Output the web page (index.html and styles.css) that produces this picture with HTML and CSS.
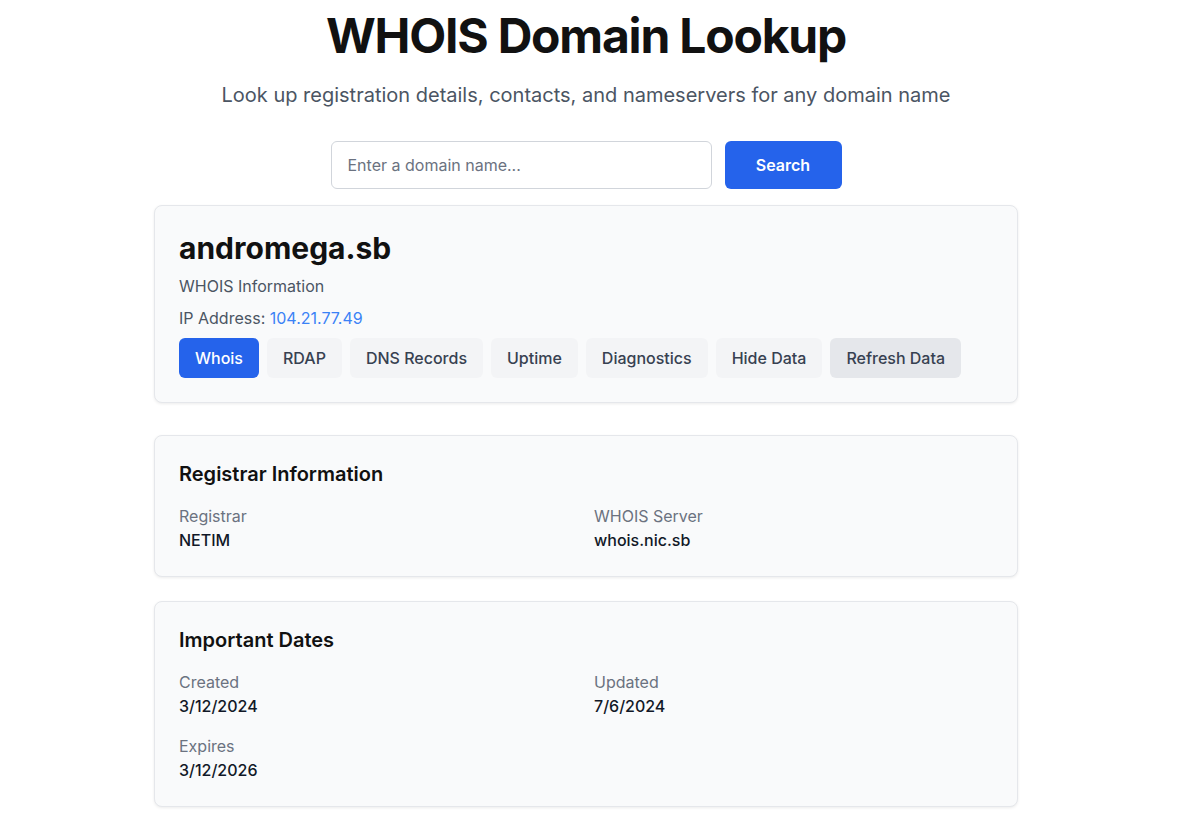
FILE: index.html
```html
<!DOCTYPE html>
<html lang="en">
<head>
  <meta charset="UTF-8">
  <meta name="viewport" content="width=device-width, initial-scale=1.0">
  <title>WHOIS Domain Lookup</title>
  <link rel="stylesheet" href="styles.css">
</head>
<body>
  <div class="page">
    <header class="page-header">
      <h1>WHOIS Domain Lookup</h1>
      <p class="subtitle">Look up registration details, contacts, and nameservers for any domain name</p>
    </header>

    <form class="search-form" onsubmit="return false;">
      <input type="text" class="search-input" placeholder="Enter a domain name...">
      <button type="submit" class="search-button">Search</button>
    </form>

    <section class="card domain-card">
      <h2 class="domain-name">andromega.sb</h2>
      <p class="domain-sub">WHOIS Information</p>
      <p class="domain-sub">IP Address: <a href="#" class="ip-link">104.21.77.49</a></p>
      <div class="tabs">
        <button class="tab active">Whois</button>
        <button class="tab">RDAP</button>
        <button class="tab">DNS Records</button>
        <button class="tab">Uptime</button>
        <button class="tab">Diagnostics</button>
        <button class="tab">Hide Data</button>
        <button class="tab refresh">Refresh Data</button>
      </div>
    </section>

    <section class="card">
      <h3 class="card-title">Registrar Information</h3>
      <div class="info-grid">
        <div class="info-item">
          <div class="info-label">Registrar</div>
          <div class="info-value">NETIM</div>
        </div>
        <div class="info-item">
          <div class="info-label">WHOIS Server</div>
          <div class="info-value">whois.nic.sb</div>
        </div>
      </div>
    </section>

    <section class="card">
      <h3 class="card-title">Important Dates</h3>
      <div class="info-grid">
        <div class="info-item">
          <div class="info-label">Created</div>
          <div class="info-value">3/12/2024</div>
        </div>
        <div class="info-item">
          <div class="info-label">Updated</div>
          <div class="info-value">7/6/2024</div>
        </div>
        <div class="info-item">
          <div class="info-label">Expires</div>
          <div class="info-value">3/12/2026</div>
        </div>
      </div>
    </section>
  </div>
</body>
</html>
```

FILE: styles.css
```css
* {
  box-sizing: border-box;
}
body {
  font-family: Inter, 'Noto Sans', sans-serif;
  background-color: #ffffff;
  color: #111827;
  margin: 0;
  padding: 12px 18px 40px 0;
  line-height: 1.5;
}
.page {
  max-width: 864px;
  margin: 0 auto;
}
.page-header {
  text-align: center;
}
.page-header h1 {
  font-size: 48px;
  line-height: 48px;
  font-weight: 700;
  letter-spacing: -1.2px;
  margin: 0;
  color: #111111;
}
.subtitle {
  font-size: 20px;
  line-height: 28px;
  color: #4b5563;
  margin: 21px 0 0;
}
.search-form {
  display: flex;
  justify-content: center;
  gap: 13px;
  margin-top: 32px;
}
.search-input {
  width: 381px;
  height: 48px;
  padding: 12px 16px;
  border: 1px solid #d1d5db;
  border-radius: 6px;
  font-family: inherit;
  font-size: 16px;
  color: #111827;
}
.search-input::placeholder {
  color: #6b7280;
}
.search-button {
  width: 117px;
  height: 48px;
  background-color: #2563eb;
  color: #ffffff;
  border: none;
  border-radius: 6px;
  font-family: inherit;
  font-size: 16px;
  font-weight: 600;
  cursor: pointer;
}
.card {
  background-color: #f9fafb;
  border: 1px solid #e5e7eb;
  border-radius: 8px;
  box-shadow: 0 1px 3px rgba(0, 0, 0, 0.08);
  padding: 24px;
  margin-bottom: 24px;
}
.domain-card {
  margin-top: 16px;
  margin-bottom: 32px;
}
.domain-name {
  font-size: 30px;
  line-height: 36px;
  font-weight: 700;
  margin: 0;
  color: #111111;
}
.domain-sub {
  font-size: 16px;
  line-height: 24px;
  color: #4b5563;
  margin: 8px 0 0;
}
.ip-link {
  color: #3b82f6;
  text-decoration: none;
}
.tabs {
  display: flex;
  gap: 8px;
  margin-top: 8px;
}
.tab {
  height: 40px;
  padding: 0 16px;
  border: none;
  border-radius: 6px;
  background-color: #f3f4f6;
  color: #374151;
  font-family: inherit;
  font-size: 16px;
  font-weight: 500;
  cursor: pointer;
}
.tab.active {
  background-color: #2563eb;
  color: #ffffff;
}
.tab.refresh {
  background-color: #e5e7eb;
}
.card-title {
  font-size: 20px;
  line-height: 28px;
  font-weight: 600;
  margin: 0 0 16px;
  color: #111111;
}
.info-grid {
  display: grid;
  grid-template-columns: 1fr 1fr;
  gap: 16px;
}
.info-label {
  font-size: 16px;
  line-height: 24px;
  color: #6b7280;
}
.info-value {
  font-size: 16px;
  line-height: 24px;
  font-weight: 500;
  color: #111827;
}
```
